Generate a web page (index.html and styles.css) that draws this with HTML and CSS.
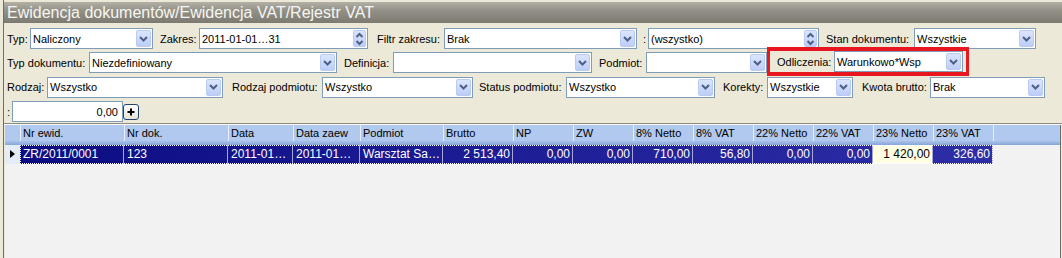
FILE: index.html
```html
<!DOCTYPE html>
<html lang="pl">
<head>
    <meta charset="UTF-8">
    <meta name="viewport" content="width=device-width, initial-scale=1.0">
    <title>Rejestr VAT</title>
    <link rel="stylesheet" href="styles.css">
</head>
<body>
  <div class="window">
    <div class="caption">Ewidencja dokumentów/Ewidencja VAT/Rejestr VAT</div>

    <div class="filters">
      <div class="frow">
        <span class="lbl first w23">Typ:</span>
        <div class="combo w123"><span class="val">Naliczony</span><span class="drop"><svg width="9" height="6" viewBox="0 0 9 6"><path d="M1 1 L4.5 4.5 L8 1" /></svg></span></div>
        <span class="lbl w46">Zakres:</span>
        <div class="combo w169"><span class="val">2011-01-01…31</span><span class="spin"><svg width="9" height="14" viewBox="0 0 9 14"><path d="M1.5 5 L4.5 2 L7.5 5" /><path d="M1.5 9 L4.5 12 L7.5 9" /></svg></span></div>
        <span class="lbl p9 w76">Filtr zakresu:</span>
        <div class="combo w193"><span class="val">Brak</span><span class="drop"><svg width="9" height="6" viewBox="0 0 9 6"><path d="M1 1 L4.5 4.5 L8 1" /></svg></span></div>
        <span class="lbl p6 w11">:</span>
        <div class="combo w171"><span class="val">(wszystko)</span><span class="spin"><svg width="9" height="14" viewBox="0 0 9 14"><path d="M1.5 5 L4.5 2 L7.5 5" /><path d="M1.5 9 L4.5 12 L7.5 9" /></svg></span></div>
        <span class="lbl w95">Stan dokumentu:</span>
        <div class="combo w122"><span class="val">Wszystkie</span><span class="drop"><svg width="9" height="6" viewBox="0 0 9 6"><path d="M1 1 L4.5 4.5 L8 1" /></svg></span></div>
      </div>

      <div class="frow">
        <span class="lbl first w82">Typ dokumentu:</span>
        <div class="combo w248"><span class="val">Niezdefiniowany</span><span class="drop"><svg width="9" height="6" viewBox="0 0 9 6"><path d="M1 1 L4.5 4.5 L8 1" /></svg></span></div>
        <span class="lbl w56">Definicja:</span>
        <div class="combo w199"><span class="val"></span><span class="drop"><svg width="9" height="6" viewBox="0 0 9 6"><path d="M1 1 L4.5 4.5 L8 1" /></svg></span></div>
        <span class="lbl w54">Podmiot:</span>
        <div class="combo w121"><span class="val"></span><span class="drop"><svg width="9" height="6" viewBox="0 0 9 6"><path d="M1 1 L4.5 4.5 L8 1" /></svg></span></div>
        <div class="mark">
          <span class="lbl w64">Odliczenia:</span>
          <div class="combo w129"><span class="val">Warunkowo*Wsp</span><span class="drop"><svg width="9" height="6" viewBox="0 0 9 6"><path d="M1 1 L4.5 4.5 L8 1" /></svg></span></div>
        </div>
      </div>

      <div class="frow">
        <span class="lbl first w40">Rodzaj:</span>
        <div class="combo w176"><span class="val">Wszystko</span><span class="drop"><svg width="9" height="6" viewBox="0 0 9 6"><path d="M1 1 L4.5 4.5 L8 1" /></svg></span></div>
        <span class="lbl p9 w99">Rodzaj podmiotu:</span>
        <div class="combo w151"><span class="val">Wszystko</span><span class="drop"><svg width="9" height="6" viewBox="0 0 9 6"><path d="M1 1 L4.5 4.5 L8 1" /></svg></span></div>
        <span class="lbl p6 w93">Status podmiotu:</span>
        <div class="combo w149"><span class="val">Wszystko</span><span class="drop"><svg width="9" height="6" viewBox="0 0 9 6"><path d="M1 1 L4.5 4.5 L8 1" /></svg></span></div>
        <span class="lbl p8 w52">Korekty:</span>
        <div class="combo w86"><span class="val">Wszystkie</span><span class="drop"><svg width="9" height="6" viewBox="0 0 9 6"><path d="M1 1 L4.5 4.5 L8 1" /></svg></span></div>
        <span class="lbl p9 w77">Kwota brutto:</span>
        <div class="combo w115"><span class="val">Brak</span><span class="drop"><svg width="9" height="6" viewBox="0 0 9 6"><path d="M1 1 L4.5 4.5 L8 1" /></svg></span></div>
      </div>

      <div class="frow">
        <span class="lbl first w5">:</span>
        <div class="combo w111"><span class="val num">0,00</span></div>
        <span class="plus"><svg width="8" height="8" viewBox="0 0 8 8"><path d="M4 0.5 V7.5 M0.5 4 H7.5" /></svg></span>
      </div>
    </div>

    <div class="sep"></div>

    <div class="grid">
      <div class="ghead">
        <span class="hc"></span>
        <span class="hc">Nr ewid.</span>
        <span class="hc">Nr dok.</span>
        <span class="hc">Data</span>
        <span class="hc">Data zaew</span>
        <span class="hc">Podmiot</span>
        <span class="hc">Brutto</span>
        <span class="hc">NP</span>
        <span class="hc">ZW</span>
        <span class="hc">8% Netto</span>
        <span class="hc">8% VAT</span>
        <span class="hc">22% Netto</span>
        <span class="hc">22% VAT</span>
        <span class="hc">23% Netto</span>
        <span class="hc">23% VAT</span>
        <span class="hc"></span>
      </div>
      <div class="gstrip"></div>
      <div class="grow">
        <span class="ind"></span>
        <div class="cells">
          <span class="c">ZR/2011/0001</span>
          <span class="c">123</span>
          <span class="c">2011-01…</span>
          <span class="c">2011-01…</span>
          <span class="c">Warsztat Sa…</span>
          <span class="c num">2 513,40</span>
          <span class="c num">0,00</span>
          <span class="c num">0,00</span>
          <span class="c num">710,00</span>
          <span class="c num">56,80</span>
          <span class="c num">0,00</span>
          <span class="c num">0,00</span>
          <span class="c num edit">1 420,00</span>
          <span class="c num">326,60</span>
        </div>
      </div>
    </div>
  </div>
</body>
</html>
```

FILE: styles.css
```css
*{margin:0;padding:0;box-sizing:border-box;}
body{background:#ece9d8;font-family:"Liberation Sans",Arial,sans-serif;font-size:11px;color:#000;width:1062px;height:258px;overflow:hidden;}

.window{margin-left:3px;height:258px;border-left:1px solid #6e6d66;display:flex;flex-direction:column;}
.caption{margin-top:2px;height:21px;padding-left:3px;line-height:21px;font-size:16px;color:#f6f6f2;white-space:nowrap;
  background:linear-gradient(#b3b1a6,#939187 40%,#7d7b71);}

/* filtry */
.filters{padding:5px 0 0 3px;display:flex;flex-direction:column;gap:3.4px;}
.frow{display:flex;align-items:center;height:21px;}
.lbl{flex:none;white-space:nowrap;padding-left:7px;}
.lbl.first{padding-left:0;}
.lbl.p6{padding-left:6px;}
.lbl.p8{padding-left:8px;}
.lbl.p9{padding-left:9px;}

.combo{flex:none;height:21px;display:flex;align-items:center;background:#fff;border:1px solid #7f9db9;}
.combo .val{flex:1;padding-left:2px;white-space:nowrap;overflow:hidden;}
.combo .val.num{text-align:right;padding-right:4px;}
.drop,.spin{flex:none;width:15px;height:17px;margin:0 1px;display:flex;align-items:center;justify-content:center;border:1px solid #b9cbf3;border-radius:2px;
  background:linear-gradient(#dbe5fd,#bccdf8);}
.spin{width:13px;}
.drop path,.spin path{fill:none;stroke:#4d6086;stroke-width:2;}

.mark{flex:none;align-self:flex-start;margin-top:-5px;height:29px;border:solid #e8161f;border-width:4px 3px;padding-right:3px;display:flex;align-items:center;}

.plus{flex:none;width:16px;height:16px;display:flex;align-items:center;justify-content:center;border:1px solid #22426e;border-radius:3px;background:linear-gradient(#ffffff,#e4e2d8);}
.plus path{stroke:#000;stroke-width:2;}

.w5{width:5px;}.w11{width:11px;}.w23{width:23px;}.w40{width:40px;}.w46{width:46px;}.w52{width:52px;}.w54{width:54px;}
.w56{width:56px;}.w64{width:64px;}.w76{width:76px;}.w77{width:77px;}.w82{width:82px;}.w86{width:86px;}.w93{width:93px;}
.w95{width:95px;}.w99{width:99px;}.w111{width:111px;}.w115{width:115px;}.w121{width:121px;}.w122{width:122px;}.w123{width:123px;}
.w129{width:129px;}.w149{width:149px;}.w151{width:151px;}.w169{width:169px;}.w171{width:171px;}.w176{width:176px;}
.w193{width:193px;}.w199{width:199px;}.w248{width:248px;}

.sep{margin-top:1px;height:2px;border-top:1px solid #8d8c84;border-bottom:1px solid #fbfaf5;}

/* tabela */
.grid{flex:1;margin:0 1px 0 1px;background:#f2f2f2;border-right:1px solid #6e6d66;}
.ghead{display:grid;grid-template-columns:15px 104px 104px 65px 67px 83px 70px repeat(8,60px) 1fr;height:16px;background:#b1c9ef;}
.hc{line-height:16px;padding-left:2px;white-space:nowrap;overflow:hidden;border-left:1px solid #e9f0fb;}
.hc:first-child{border-left:none;}
.gstrip{height:4px;background:linear-gradient(#a9c2ea,#86a6d8);}

.grow{display:flex;height:19px;}
.ind{width:15px;flex:none;background:#e4ecf8;position:relative;}
.ind::after{content:"";position:absolute;left:5px;top:5px;border-left:5px solid #000;border-top:4.5px solid transparent;border-bottom:4.5px solid transparent;}
.cells{display:grid;grid-template-columns:104px 104px 65px 67px 83px 70px repeat(8,60px);
  background:linear-gradient(to right,#0c0c83,#2e2ea7);outline:1px dotted #fff;outline-offset:-1px;}
.c{color:#fff;font-size:12px;line-height:19px;padding:0 2px 0 3px;white-space:nowrap;overflow:hidden;border-right:1px solid #a7a7dc;}
.c.num{text-align:right;}
.c.edit{background:#ffffe4;color:#000;}
```
